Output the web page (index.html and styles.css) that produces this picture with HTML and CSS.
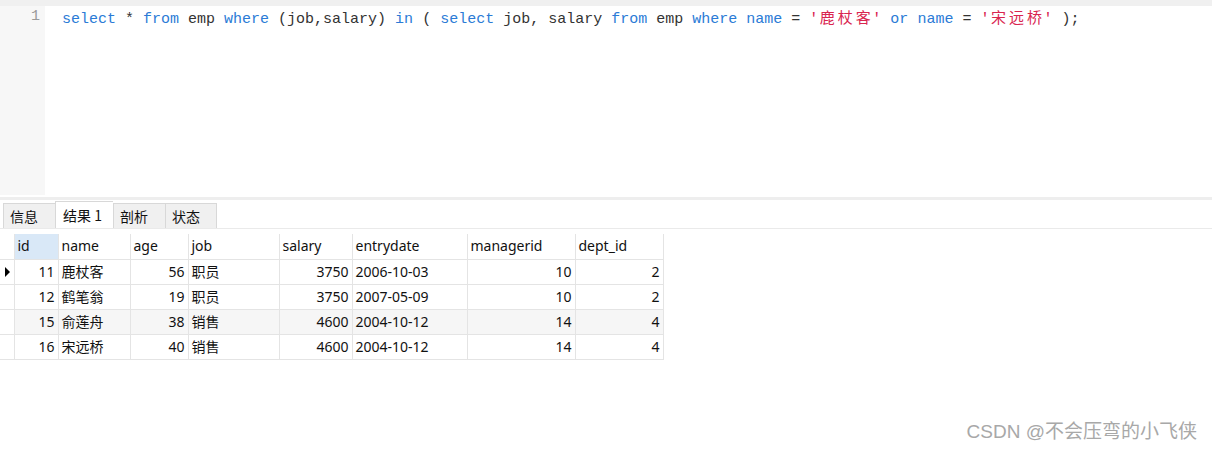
FILE: index.html
```html
<!DOCTYPE html>
<html lang="zh">
<head>
<meta charset="utf-8">
<link rel="stylesheet" href="styles.css">
</head>
<body>
<div class="app">
  <div class="topbar"></div>
  <div class="editor">
    <div class="gutter"><span class="ln">1</span></div>
    <div class="code"><span class="kw">select</span> * <span class="kw">from</span> emp <span class="kw">where</span> (job,salary) <span class="kw">in</span> ( <span class="kw">select</span> job, salary <span class="kw">from</span> emp <span class="kw">where</span> <span class="kw">name</span> = <span class="str">'<span class="cjk">鹿杖客</span>'</span> <span class="kw">or</span> <span class="kw">name</span> = <span class="str">'<span class="cjk">宋远桥</span>'</span> );</div>
  </div>
  <div class="sep"></div>
  <div class="tabs">
    <div class="tab">信息</div>
    <div class="tab active">结果 1</div>
    <div class="tab">剖析</div>
    <div class="tab">状态</div>
  </div>
  <div class="result">
    <table class="grid">
      <colgroup>
        <col style="width:14px"><col style="width:44px"><col style="width:72px"><col style="width:58px"><col style="width:91px"><col style="width:73px"><col style="width:115px"><col style="width:108px"><col style="width:88px">
      </colgroup>
      <thead>
        <tr><th class="ind"></th><th class="sel">id</th><th>name</th><th>age</th><th>job</th><th>salary</th><th>entrydate</th><th>managerid</th><th>dept_id</th></tr>
      </thead>
      <tbody>
        <tr><td class="ind"><span class="arrow"></span></td><td class="num">11</td><td>鹿杖客</td><td class="num">56</td><td>职员</td><td class="num">3750</td><td>2006-10-03</td><td class="num">10</td><td class="num">2</td></tr>
        <tr><td class="ind"></td><td class="num">12</td><td>鹤笔翁</td><td class="num">19</td><td>职员</td><td class="num">3750</td><td>2007-05-09</td><td class="num">10</td><td class="num">2</td></tr>
        <tr class="alt"><td class="ind"></td><td class="num">15</td><td>俞莲舟</td><td class="num">38</td><td>销售</td><td class="num">4600</td><td>2004-10-12</td><td class="num">14</td><td class="num">4</td></tr>
        <tr><td class="ind"></td><td class="num">16</td><td>宋远桥</td><td class="num">40</td><td>销售</td><td class="num">4600</td><td>2004-10-12</td><td class="num">14</td><td class="num">4</td></tr>
      </tbody>
    </table>
    <div class="watermark">CSDN @不会压弯的小飞侠</div>
  </div>
</div>
</body>
</html>
```
FILE: styles.css
```css
* { box-sizing: border-box; }
html, body { margin: 0; padding: 0; background: #ffffff; }
.app {
  width: 1212px;
  height: 451px;
  display: flex;
  flex-direction: column;
  overflow: hidden;
  font-family: "Noto Sans", "Noto Sans CJK SC", sans-serif;
}
.topbar { height: 6px; background: #f0f0f0; flex: none; }
.editor { height: 189px; display: flex; flex: none; background: #ffffff; }
.gutter {
  width: 45px;
  background: #f7f7f7;
  text-align: right;
  padding-right: 5px;
}
.ln {
  display: block;
  font-family: "Liberation Mono", "Noto Sans CJK SC", monospace;
  font-size: 15px;
  line-height: 21px;
  color: #9a9a9a;
}
.code {
  padding-left: 17px;
  font-family: "Liberation Mono", "Noto Sans CJK SC", monospace;
  font-size: 15px;
  line-height: 21px;
  color: #333333;
  white-space: pre;
}
.kw { color: #2b7bd6; }
.str { color: #d9254f; }
.cjk {
  letter-spacing: 3px;
  padding-left: 1.5px;
  margin-right: -1.5px;
  font-family: "Noto Sans CJK SC", sans-serif;
}
.sep { height: 5px; flex: none; border-top: 2px solid #ffffff; background: #eeeeee; }
.tabs {
  height: 28px;
  flex: none;
  display: flex;
  align-items: flex-end;
  padding-left: 3px;
  background: #ffffff;
}
.tab {
  height: 25px;
  width: 52px;
  border: 1px solid #d8d8d8;
  border-bottom: none;
  border-right: none;
  background: #f0f0f0;
  font-family: "Noto Sans CJK SC", sans-serif;
  font-size: 14px;
  line-height: 24px;
  color: #111111;
  padding-left: 6px;
}
.tab:last-child { border-right: 1px solid #d8d8d8; }
.tab.active { height: 27px; width: 58px; background: #ffffff; line-height: 26px; padding-left: 7px; }
.result { flex: 1; position: relative; padding-top: 5px; border-top: 1px solid #eaeaea; }
.grid {
  border-collapse: collapse;
  table-layout: fixed;
  width: 663px;
  font-family: "Noto Sans", "Noto Sans CJK SC", sans-serif;
  font-size: 14px;
  color: #111111;
}
.grid th, .grid td {
  height: 25px;
  padding: 0 3px;
  border-right: 1px solid #e4e4e4;
  border-bottom: 1px solid #e4e4e4;
  font-weight: normal;
  text-align: left;
  white-space: nowrap;
  line-height: 24px;
}
.grid th.sel { background: #d9e8f7; }
.grid .ind { padding: 0; background: #ffffff; border-right: 1px solid #e4e4e4; position: relative; }
.grid td.num { text-align: right; }
.grid tr.alt td { background: #f6f6f6; }
.grid tr.alt td.ind { background: #ffffff; }
.arrow {
  position: absolute;
  left: 5px;
  top: 7px;
  width: 0;
  height: 0;
  border-top: 5px solid transparent;
  border-bottom: 5px solid transparent;
  border-left: 5px solid #000000;
}
.watermark {
  position: absolute;
  right: 15px;
  bottom: 8px;
  font-family: "Liberation Sans", "Noto Sans CJK SC", sans-serif;
  font-size: 19px;
  color: #a8a8a8;
}
```
